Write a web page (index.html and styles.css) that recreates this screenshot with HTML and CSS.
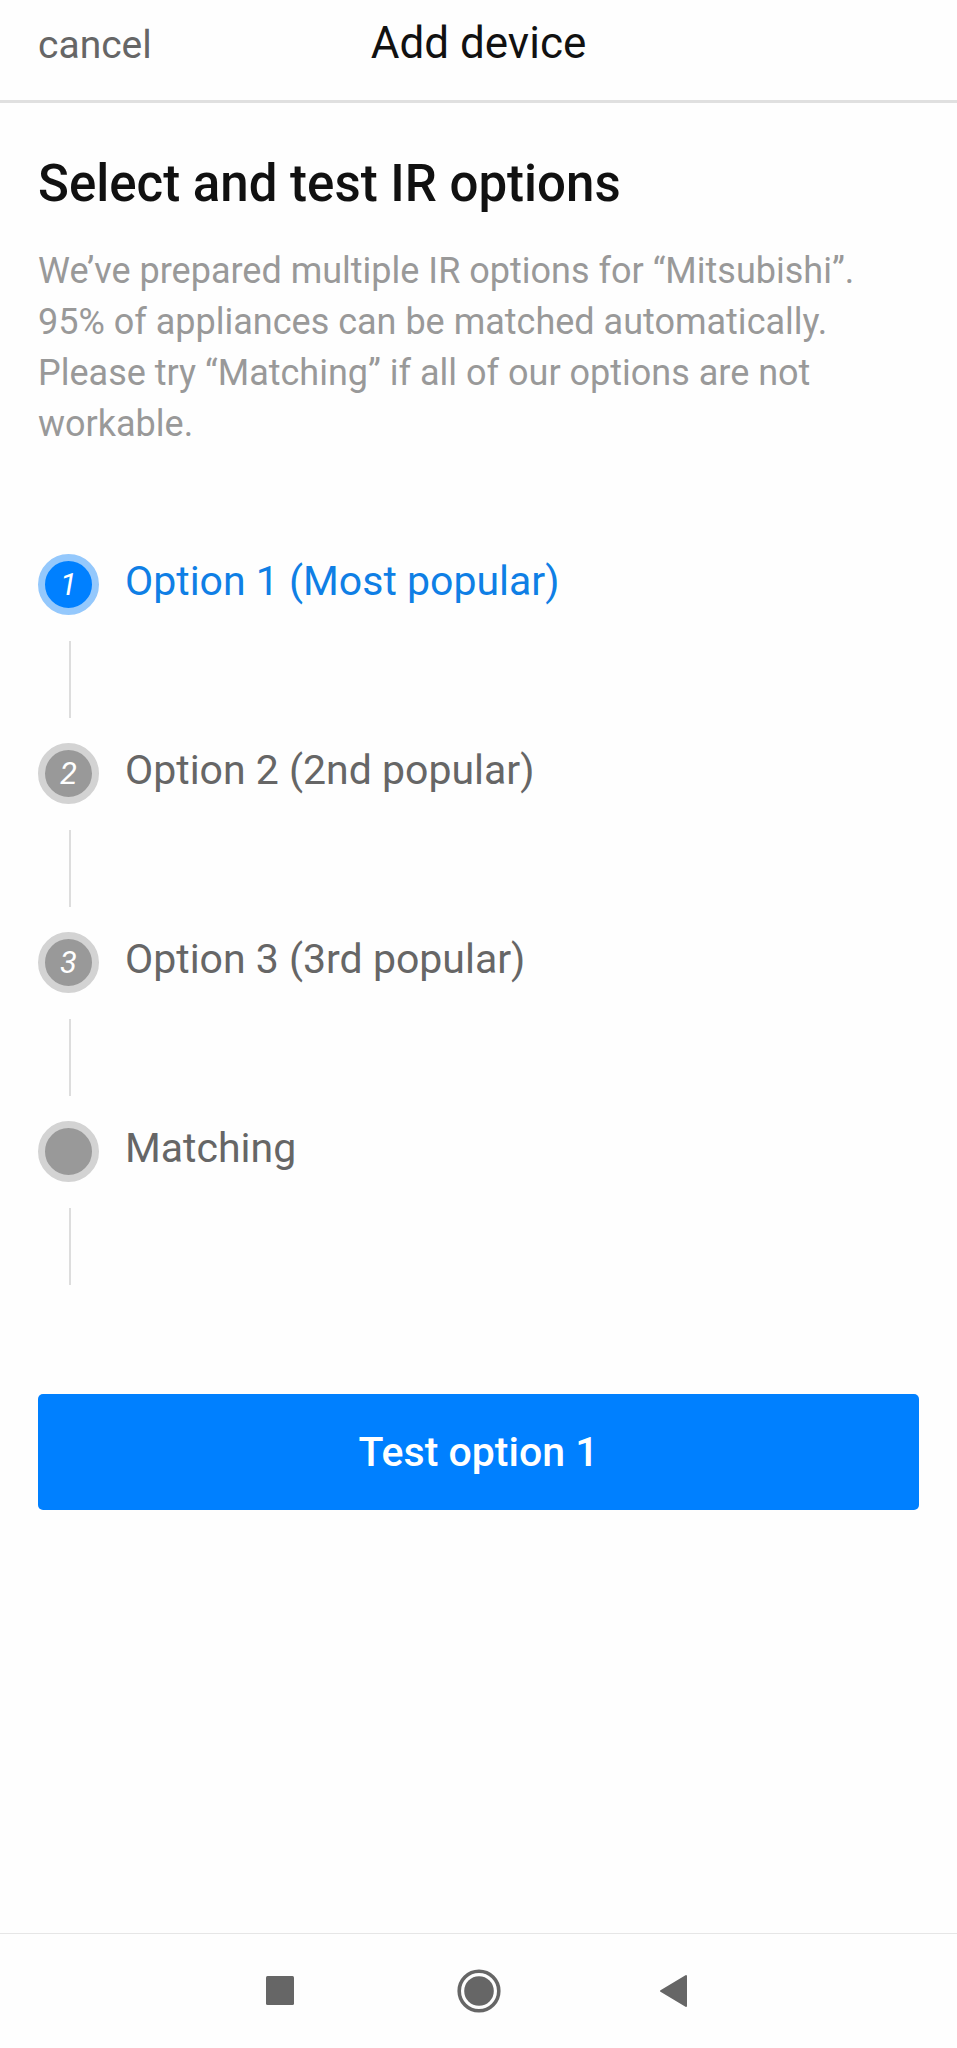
FILE: index.html
```
<!DOCTYPE html>
<html lang="en">
<head>
    <meta charset="UTF-8">
    <meta name="viewport" content="width=device-width, initial-scale=1.0">
    <title>Add device</title>
    <link rel="stylesheet" href="styles.css">
</head>
<body>
    <header class="top-bar">
        <button type="button" class="cancel-btn">cancel</button>
        <h1 class="top-title">Add device</h1>
    </header>

    <main class="content">
        <h2>Select and test IR options</h2>
        <p class="intro">We’ve prepared multiple IR options for “Mitsubishi”. 95% of appliances can be matched automatically. Please try “Matching” if all of our options are not workable.</p>

        <!-- Option steps -->
        <ol class="steps">
            <li class="step active">
                <span class="badge">1</span>
                <span class="step-label">Option 1 (Most popular)</span>
            </li>
            <li class="step">
                <span class="badge">2</span>
                <span class="step-label">Option 2 (2nd popular)</span>
            </li>
            <li class="step">
                <span class="badge">3</span>
                <span class="step-label">Option 3 (3rd popular)</span>
            </li>
            <li class="step">
                <span class="badge"></span>
                <span class="step-label">Matching</span>
            </li>
        </ol>

        <button type="button" class="test-btn">Test option 1</button>
    </main>

    <!-- System navigation -->
    <nav class="nav-bar">
        <button type="button" class="nav-btn" aria-label="Recent apps">
            <svg width="44" height="44" viewBox="0 0 44 44"><rect x="8" y="7" width="28" height="29" rx="1.5"/></svg>
        </button>
        <button type="button" class="nav-btn" aria-label="Home">
            <svg width="44" height="44" viewBox="0 0 44 44">
                <circle cx="22" cy="22" r="19.8" fill="none" stroke="#666" stroke-width="3.6"/>
                <circle cx="22" cy="22" r="14.8"/>
            </svg>
        </button>
        <button type="button" class="nav-btn" aria-label="Back">
            <svg width="44" height="44" viewBox="0 0 44 44"><path d="M5 22 L30 7 V37 Z" stroke="#666" stroke-width="2" stroke-linejoin="round"/></svg>
        </button>
    </nav>
</body>
</html>
```
FILE: styles.css
```
/* Reset styles */
* {
    margin: 0;
    padding: 0;
    box-sizing: border-box;
}

body {
    display: flex;
    flex-direction: column;
    min-height: 100vh;
    background-color: #fefefe;
    font-family: Roboto, "Liberation Sans", sans-serif;
    color: #111;
}

button {
    border: none;
    background: none;
    font-family: inherit;
    cursor: pointer;
}

/* Top bar */
.top-bar {
    display: grid;
    grid-template-columns: 1fr auto 1fr;
    align-items: baseline;
    padding: 18px 38px 30px;
    border-bottom: 3px solid #e0e0e0;
}

.cancel-btn {
    justify-self: start;
    font-size: 39px;
    line-height: 50px;
    color: #666;
}

.top-title {
    font-size: 44px;
    font-weight: 400;
    line-height: 50px;
}

/* Page content */
.content {
    flex: 1;
    padding: 49px 38px;
}

.content h2 {
    font-size: 51px;
    font-weight: 500;
    line-height: 64px;
}

.intro {
    margin-top: 30px;
    font-size: 36px;
    line-height: 51px;
    color: #999;
}

/* Steps with the line under each badge */
.steps {
    margin-top: 104px;
    list-style: none;
}

.step {
    display: grid;
    grid-template-columns: 64px 1fr;
    column-gap: 23px;
    color: #666;
}

.step::after {
    content: "";
    justify-self: center;
    width: 2px;
    height: 77px;
    margin: 26px 0 25px;
    background-color: #ddd;
}

.badge {
    display: flex;
    justify-content: center;
    align-items: center;
    width: 61px;
    height: 61px;
    border: 7px solid #d3d3d3;
    border-radius: 50%;
    background-color: #999;
    color: #fff;
    font-size: 31px;
    font-style: italic;
}

.step-label {
    font-size: 41px;
    line-height: 54px;
}

.active .badge {
    border-color: #94c8fc;
    background-color: #0080ff;
}

.active .step-label {
    color: #0f7fe5;
}

.test-btn {
    width: 100%;
    margin-top: 84px;
    padding: 31px;
    border-radius: 5px;
    background-color: #0080ff;
    color: #fff;
    font-size: 41px;
    font-weight: 500;
    line-height: 54px;
}

/* System navigation */
.nav-bar {
    display: flex;
    justify-content: center;
    border-top: 1px solid #e6e6e6;
}

.nav-btn {
    width: 199px;
    padding: 35px 0;
}

.nav-btn svg {
    display: block;
    margin: 0 auto;
    fill: #666;
}
```
